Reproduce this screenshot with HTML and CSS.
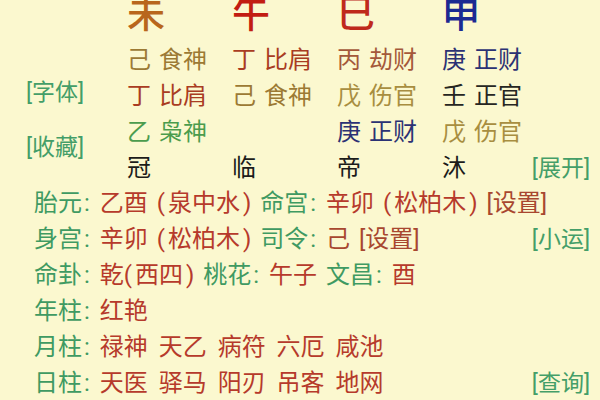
FILE: index.html
```html
<!DOCTYPE html>
<html lang="zh-CN">
<head>
<meta charset="utf-8">
<title>排盘</title>
<link rel="stylesheet" href="styles.css">
</head>
<body>
<div class="page">
  <div class="chart">
    <div class="side">
      <span class="link">[字体]</span>
      <span class="link second">[收藏]</span>
    </div>
    <div class="big c-orange col1">未</div>
    <div class="big c-red col2">午</div>
    <div class="big c-red2 col3">巳</div>
    <div class="big c-navy col4">申</div>

    <div class="cell col1"><span class="c-earth">己 食神</span></div>
    <div class="cell col2"><span class="c-fire">丁 比肩</span></div>
    <div class="cell col3"><span class="c-fire2">丙 劫财</span></div>
    <div class="cell col4"><span class="c-metal">庚 正财</span></div>

    <div class="cell col1"><span class="c-fire">丁 比肩</span></div>
    <div class="cell col2"><span class="c-earth">己 食神</span></div>
    <div class="cell col3"><span class="c-earth2">戊 伤官</span></div>
    <div class="cell col4"><span class="c-water">壬 正官</span></div>

    <div class="cell col1"><span class="c-wood">乙 枭神</span></div>
    <div class="cell col3"><span class="c-metal">庚 正财</span></div>
    <div class="cell col4"><span class="c-earth2">戊 伤官</span></div>

    <div class="cell col1 stage">冠</div>
    <div class="cell col2 stage">临</div>
    <div class="cell col3 stage">帝</div>
    <div class="cell col4 stage">沐</div>
    <div class="cell col5"><span class="link">[展开]</span></div>
  </div>

  <div class="info">
    <div class="row"><span class="txt"><span class="k">胎元<span class="colon">:</span></span> <span class="v">乙酉 <span class="pl">(</span>泉中水<span class="pr">)</span></span> <span class="k">命宫<span class="colon">:</span></span> <span class="v">辛卯 <span class="pl">(</span>松柏木<span class="pr">)</span></span> <span class="act">[设置]</span></span></div>
    <div class="row"><span class="txt"><span class="k">身宫<span class="colon">:</span></span> <span class="v">辛卯 <span class="pl">(</span>松柏木<span class="pr">)</span></span> <span class="k">司令<span class="colon">:</span></span> <span class="act">己</span> <span class="act">[设置]</span></span><span class="link">[小运]</span></div>
    <div class="row"><span class="txt"><span class="k">命卦<span class="colon">:</span></span> <span class="v">乾<span class="pl">(</span>西四<span class="pr">)</span></span> <span class="k">桃花<span class="colon">:</span></span> <span class="v">午子</span> <span class="k">文昌<span class="colon">:</span></span> <span class="v">酉</span></span></div>
    <div class="row"><span class="txt"><span class="k">年柱<span class="colon">:</span></span> <span class="v">红艳</span></span></div>
    <div class="row"><span class="txt"><span class="k">月柱<span class="colon">:</span></span> <span class="v wide">禄神 天乙 病符 六厄 咸池</span></span></div>
    <div class="row"><span class="txt"><span class="k">日柱<span class="colon">:</span></span> <span class="v wide">天医 驿马 阳刃 吊客 地网</span></span><span class="link">[查询]</span></div>
  </div>
</div>
</body>
</html>
```

FILE: styles.css
```css
html, body {
  margin: 0;
  padding: 0;
}
body {
  background: #fbf8cf;
  font-family: Roboto, "Noto Sans CJK SC", sans-serif;
  width: 600px;
  height: 400px;
  overflow: hidden;
}
.page {
  margin-top: -6px;
  padding-right: 10px;
}
.chart {
  display: grid;
  grid-template-columns: 127px 105px 105px 105px 1fr auto;
  grid-template-rows: 48px 36px 36px 36px 35px;
  font-size: 24px;
  line-height: 36px;
  word-spacing: 2px;
}
.side {
  grid-column: 1;
  grid-row: 2 / 6;
  display: flex;
  flex-direction: column;
  align-items: flex-start;
  padding-left: 26px;
  padding-top: 33px;
}
.side .link {
  line-height: 36px;
}
.side .second {
  margin-top: 19px;
}
.big {
  grid-row: 1;
  font-size: 38px;
  font-weight: 500;
  line-height: 40px;
}
.col1 { grid-column: 2; }
.col2 { grid-column: 3; }
.col3 { grid-column: 4; }
.col4 { grid-column: 5; }
.col5 { grid-column: 6; justify-self: end; }
.cell {
  white-space: nowrap;
}
.stage {
  color: #1c1c1a;
}
.link {
  color: #449e68;
  font-size: 23px;
  word-spacing: 0;
}
.c-orange { color: #b8661c; }
.c-red { color: #c21d12; }
.c-red2 { color: #bf2a1c; }
.c-navy { color: #1b2a92; }
.c-earth { color: #9c7a34; }
.c-earth2 { color: #a88e40; }
.c-fire { color: #a93c22; }
.c-fire2 { color: #a4583a; }
.c-metal { color: #2b3274; }
.c-water { color: #262622; }
.c-wood { color: #4b9c4d; }

.info {
  padding-left: 34px;
  font-size: 24px;
  line-height: 36px;
}
.row {
  display: flex;
  justify-content: space-between;
  align-items: baseline;
  height: 36px;
}
.txt {
  white-space: pre;
  word-spacing: 3px;
}
.wide {
  word-spacing: 5px;
}
.colon {
  margin-left: 2px;
  margin-right: 1px;
}
.pl { margin-right: 3px; }
.pr { margin-left: 3px; }
.k { color: #3f9a62; }
.v { color: #b63a2b; }
.act { color: #a8472f; }
```
